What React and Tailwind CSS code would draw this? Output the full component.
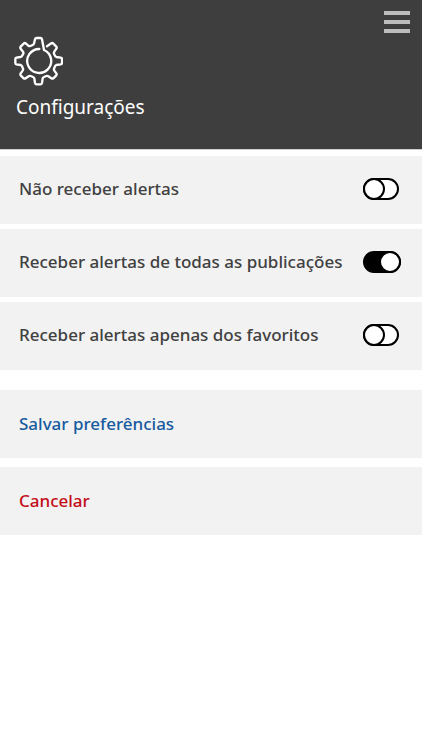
import { useState } from "react";

const OPTIONS = [
  { id: "none", label: "Não receber alertas" },
  { id: "all", label: "Receber alertas de todas as publicações" },
  { id: "favorites", label: "Receber alertas apenas dos favoritos" },
];

function GearIcon() {
  return (
    <svg
      className="size-[50px]"
      viewBox="39 33 150 150"
      fill="none"
      stroke="currentColor"
      strokeWidth="7"
      strokeLinecap="round"
      strokeLinejoin="round"
      aria-hidden="true"
    >
      <path d="M118 72 A36 36 0 1 0 132 75 L126 43 Q125 39 121 39 H110 Q106 39 105 43 L102 56 Q101 59 98 60 L91 63 Q88 64 85 62 L77 55 Q74 53 71 56 L62 65 Q60 68 62 71 L69 80 Q71 83 70 86 L66 93 Q65 96 62 96 L49 98 Q46 99 46 102 V114 Q46 117 49 118 L62 120 Q65 121 66 124 L69 131 Q70 134 68 137 L62 145 Q60 148 62 151 L71 160 Q74 162 77 160 L86 154 Q89 152 92 153 L99 156 Q102 157 103 160 L105 174 Q106 178 110 178 H121 Q125 178 126 174 L128 160 Q129 157 132 156 L139 153 Q142 152 145 154 L154 160 Q157 162 160 160 L169 151 Q171 148 169 145 L163 137 Q161 134 162 131 L165 124 Q166 121 169 120 L182 118 Q186 117 186 114 V102 Q186 99 182 98 L169 96 Q166 95 165 92 L162 86 Q161 83 163 80 L169 71 Q171 68 169 65 L160 56 Q157 53 154 55 L141 64" />
    </svg>
  );
}

function Switch({ checked, ...props }) {
  return (
    <input
      type="checkbox"
      role="switch"
      checked={checked}
      className="relative h-[22px] w-9 shrink-0 cursor-pointer appearance-none rounded-full border-2 border-black bg-white before:absolute before:-top-0.5 before:-left-0.5 before:size-[22px] before:rounded-full before:border-2 before:border-black before:bg-white before:content-[''] checked:w-[38px] checked:bg-black checked:before:-right-0.5 checked:before:left-auto"
      {...props}
    />
  );
}

export default function App() {
  const [selected, setSelected] = useState("all");

  return (
    <div className="min-h-screen bg-white font-['Noto_Sans','Open_Sans',sans-serif] text-[17px] leading-6 font-medium text-[#404040]">
      <header className="border-b border-[#cfcfcf] bg-[#3e3e3e] px-3 pt-2.5 pb-7 text-white">
        <div className="flex justify-end">
          <button type="button" aria-label="Menu" className="flex h-6 w-[26px] flex-col justify-between py-px">
            <span className="h-1 w-full bg-[#bdbdbd]" />
            <span className="h-1 w-full bg-[#bdbdbd]" />
            <span className="h-1 w-full bg-[#bdbdbd]" />
          </button>
        </div>
        <div className="mt-0.5 px-px">
          <GearIcon />
          <h1 className="mt-2 px-[3px] text-[19px] leading-[27px] font-normal">Configurações</h1>
        </div>
      </header>

      <main className="pt-1.5">
        <div className="flex flex-col gap-[5px]">
          {OPTIONS.map((option) => (
            <div key={option.id} className="flex h-[68px] items-center gap-3 bg-[#f2f2f2] pr-5 pb-0.5 pl-[19px]">
              <label htmlFor={option.id} className="min-w-0 flex-1 cursor-pointer">
                {option.label}
              </label>
              <div className="flex w-[39px] shrink-0">
                <Switch
                  id={option.id}
                  checked={selected === option.id}
                  onChange={() => setSelected(option.id)}
                />
              </div>
            </div>
          ))}
        </div>
        <div className="mt-5 flex flex-col gap-[9px]">
          <button type="button" className="h-[68px] bg-[#f2f2f2] px-[19px] text-left text-[#175a9e]">
            Salvar preferências
          </button>
          <button type="button" className="h-[68px] bg-[#f2f2f2] px-[19px] text-left text-[#c40d18]">
            Cancelar
          </button>
        </div>
      </main>
    </div>
  );
}
